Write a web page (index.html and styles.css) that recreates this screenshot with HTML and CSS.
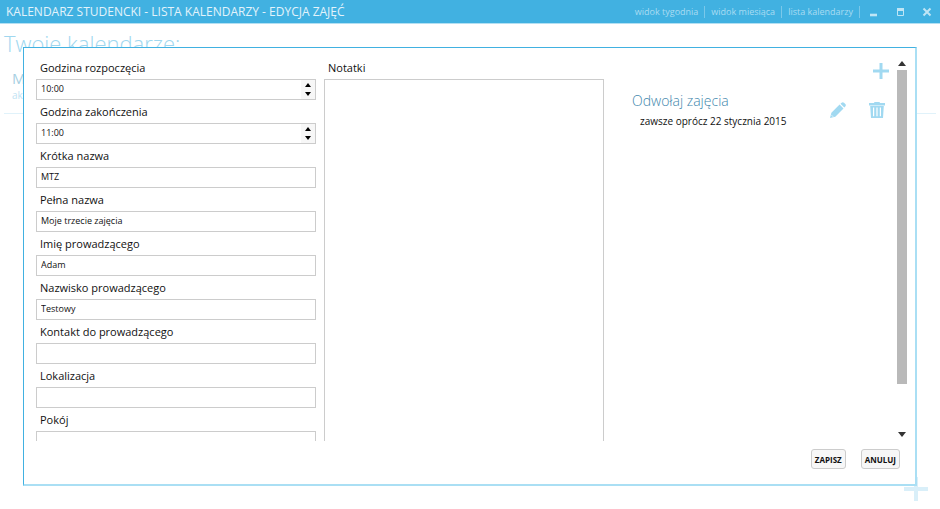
FILE: index.html
```html
<!DOCTYPE html>
<html lang="pl">
<head>
<meta charset="utf-8">
<meta name="viewport" content="width=device-width, initial-scale=1">
<title>Kalendarz studencki</title>
<link rel="stylesheet" href="styles.css">
</head>
<body>
<header class="titlebar">
  <h1 class="app-title">KALENDARZ STUDENCKI - LISTA KALENDARZY - EDYCJA ZAJĘĆ</h1>
  <nav class="nav">
    <a href="#week">widok tygodnia</a>
    <a href="#month">widok miesiąca</a>
    <a href="#list">lista kalendarzy</a>
  </nav>
  <div class="window-buttons">
    <button type="button" aria-label="Minimalizuj"><svg width="10" height="10" viewBox="0 0 10 10"><path d="M2 8h7" stroke="currentColor" stroke-width="2.6"/></svg></button>
    <button type="button" aria-label="Maksymalizuj"><svg width="10" height="10" viewBox="0 0 10 10"><path d="M2.5 2.5v6h6v-6" fill="none" stroke="currentColor"/><path d="M2 2.5h7" stroke="currentColor" stroke-width="3"/></svg></button>
    <button type="button" aria-label="Zamknij"><svg width="10" height="10" viewBox="0 0 10 10"><path d="M1.5 1.5l7 7M8.5 1.5l-7 7" stroke="currentColor" stroke-width="2"/></svg></button>
  </div>
</header>
<main class="page">
  <h2 class="page-title">Twoje kalendarze:</h2>
  <article class="calendar">
    <h3>Mój</h3>
    <p>aktywny</p>
  </article>
  <button class="page-add" type="button" aria-label="Dodaj kalendarz"><svg width="24" height="24" viewBox="0 0 24 24"><path d="M0 12h24M12 0v24" stroke="currentColor" stroke-width="4"/></svg></button>
</main>
<form class="dialog" role="dialog" aria-label="Edycja zajęć">
  <div class="scroll-area">
    <div class="columns">
      <div class="fields">
        <label for="start">Godzina rozpoczęcia</label>
        <div class="spinner"><input id="start" type="text" value="10:00"><div class="steps"><button type="button" aria-label="Później"><svg width="6" height="4" viewBox="0 0 6 4"><path d="M0 4L3 0l3 4z"/></svg></button><button type="button" aria-label="Wcześniej"><svg width="6" height="4" viewBox="0 0 6 4"><path d="M0 0h6L3 4z"/></svg></button></div></div>
        <label for="end">Godzina zakończenia</label>
        <div class="spinner"><input id="end" type="text" value="11:00"><div class="steps"><button type="button" aria-label="Później"><svg width="6" height="4" viewBox="0 0 6 4"><path d="M0 4L3 0l3 4z"/></svg></button><button type="button" aria-label="Wcześniej"><svg width="6" height="4" viewBox="0 0 6 4"><path d="M0 0h6L3 4z"/></svg></button></div></div>
        <label for="short">Krótka nazwa</label>
        <input id="short" type="text" value="MTZ">
        <label for="full">Pełna nazwa</label>
        <input id="full" type="text" value="Moje trzecie zajęcia">
        <label for="first">Imię prowadzącego</label>
        <input id="first" type="text" value="Adam">
        <label for="last">Nazwisko prowadzącego</label>
        <input id="last" type="text" value="Testowy">
        <label for="contact">Kontakt do prowadzącego</label>
        <input id="contact" type="text">
        <label for="place">Lokalizacja</label>
        <input id="place" type="text">
        <label for="room">Pokój</label>
        <input id="room" type="text">
      </div>
      <div class="fields notes">
        <label for="notes">Notatki</label>
        <textarea id="notes"></textarea>
      </div>
      <section class="rules">
        <button class="icon-button" type="button" aria-label="Dodaj"><svg width="16" height="16" viewBox="0 0 16 16"><path d="M0 8h16M8 0v16" stroke="currentColor" stroke-width="3"/></svg></button>
        <div class="rule">
          <div class="rule-text">
            <h3>Odwołaj zajęcia</h3>
            <p>zawsze oprócz 22 stycznia 2015</p>
          </div>
          <button class="icon-button" type="button" aria-label="Edytuj"><svg width="16" height="16" viewBox="0 0 16 16"><path d="M0 16l1.4-5.2L9.6 2.6l3.9 3.9-8.2 8.2zM10.5 1.8l1.1-1.1q1.2-1.1 2.4 0l1.3 1.3q1.1 1.2 0 2.4l-1 1.1z" fill="currentColor"/><path d="M1.2 12.8l2.2 2.2" stroke="#fff" stroke-width=".6"/></svg></button>
          <button class="icon-button" type="button" aria-label="Usuń"><svg width="16" height="16" viewBox="0 0 16 16"><path d="M5.5 1.5V.5h5v1" fill="none" stroke="currentColor"/><path d="M0 1h16v2.6H0zM1.2 4h13.6L14 16H2z" fill="currentColor"/><path d="M4.6 5.5v8.7M8 5.5v8.7M11.4 5.5v8.7" stroke="#fff" stroke-width="1.2"/></svg></button>
        </div>
      </section>
    </div>
    <div class="scrollbar">
      <button type="button" aria-label="W górę"><svg width="8" height="5" viewBox="0 0 8 5"><path d="M0 5l4-5 4 5z"/></svg></button>
      <div class="track"><div class="thumb"></div></div>
      <button type="button" aria-label="W dół"><svg width="8" height="5" viewBox="0 0 8 5"><path d="M0 0h8L4 5z"/></svg></button>
    </div>
  </div>
  <footer class="actions">
    <button type="submit">ZAPISZ</button>
    <button type="button">ANULUJ</button>
  </footer>
</form>
</body>
</html>
```
FILE: styles.css
```css
* { box-sizing: border-box; }

body {
  margin: 0;
  height: 100vh;
  display: flex;
  flex-direction: column;
  overflow: hidden;
  background: #fff;
  color: #111;
  font-family: "Open Sans", "Noto Sans", sans-serif;
  font-size: 11px;
}

h1, h2, h3, p { margin: 0; font-weight: 400; }

button { font: inherit; color: inherit; padding: 0; border: 0; background: none; }
svg { display: block; }

.titlebar {
  height: 24px;
  flex: none;
  display: flex;
  align-items: center;
  padding: 0 8px 0 6px;
  background: #41b1e1;
  border-bottom: 1px solid #b3e0f3;
  color: #fff;
}

.app-title { flex: 1; font-size: 12px; line-height: 16px; white-space: nowrap; color: #e3f3fb; }

.nav { display: flex; color: #a9dcf2; font-size: 9px; line-height: 12px; }
.nav a { color: inherit; text-decoration: none; padding: 0 6px; border-right: 1px solid #7ac8ea; white-space: nowrap; }

.window-buttons { display: flex; gap: 17px; padding-left: 8px; color: #bfe5f5; }

.page { flex: 1; padding: 3px 4px 4px; color: #bfe3f3; }
.page-title { font-size: 22px; line-height: 32px; font-weight: 300; color: #a0d7ef; }
.calendar { padding: 10px 8px 10px; border-bottom: 1px solid #e0f2fa; }
.calendar h3 { font-size: 15px; line-height: 18px; color: #a6cfe2; }
.calendar p { font-size: 10px; line-height: 16px; }
.page-add { position: absolute; right: 12px; bottom: 8px; color: #d9eff9; }

.dialog {
  position: absolute;
  inset: 47px 23px 23px 23px;
  display: flex;
  flex-direction: column;
  padding: 8px 8px 15px 12px;
  background: #fff;
  border: 1px solid #41b1e1;
  border-right: 2px solid #aadff4;
  border-bottom: 2px solid #aadff4;
}

.scroll-area { flex: 1; min-height: 0; display: flex; gap: 5px; overflow: hidden; }

.columns { flex: 1; display: grid; grid-template-columns: repeat(3, 1fr); gap: 8px; height: 440px; }

.fields { display: flex; flex-direction: column; }
.fields label { padding: 4px 4px 0; line-height: 16px; height: 23px; }
.fields input, .notes textarea {
  width: 100%;
  height: 21px;
  padding: 0 4px 2px;
  border: 1px solid #ccc;
  border-radius: 0;
  background: #fff;
  color: #111;
  font: inherit;
  font-size: 9px;
  outline: 0;
}
.notes textarea { flex: 1; resize: none; }

.spinner { display: flex; height: 21px; border: 1px solid #ccc; }
.fields .spinner input { flex: 1; min-width: 0; height: 19px; border: 0; }
.steps { width: 14px; display: flex; flex-direction: column; background: #f7f7f7; }
.steps button { flex: 1; display: grid; place-items: center; }

.rules { display: flex; flex-direction: column; padding: 7px 3px 0 20px; color: #a1d9f1; }
.rules > .icon-button { align-self: flex-end; }
.rule { display: flex; align-items: center; gap: 23px; margin-top: 11px; padding-right: 4px; }
.rule-text { flex: 1; }
.rule-text h3 { font-size: 14px; line-height: 22px; font-weight: 300; color: #3f87ad; }
.rule-text p { padding-left: 8px; font-size: 10px; line-height: 18px; color: #111; white-space: nowrap; }

.scrollbar { width: 10px; display: flex; flex-direction: column; color: #333; }
.scrollbar button { height: 14px; display: grid; place-items: center; fill: #333; }
.track { flex: 1; }
.thumb { height: 88%; background: #b9b9b9; }

.actions { display: flex; justify-content: flex-end; gap: 15px; padding: 8px 7px 0 0; }
.actions button {
  height: 20px;
  padding: 0 3px;
  border: 1px solid #ccc;
  border-radius: 3px;
  background: #f7f7f7;
  color: #111;
  font-size: 8px;
  font-weight: 700;
}
```
